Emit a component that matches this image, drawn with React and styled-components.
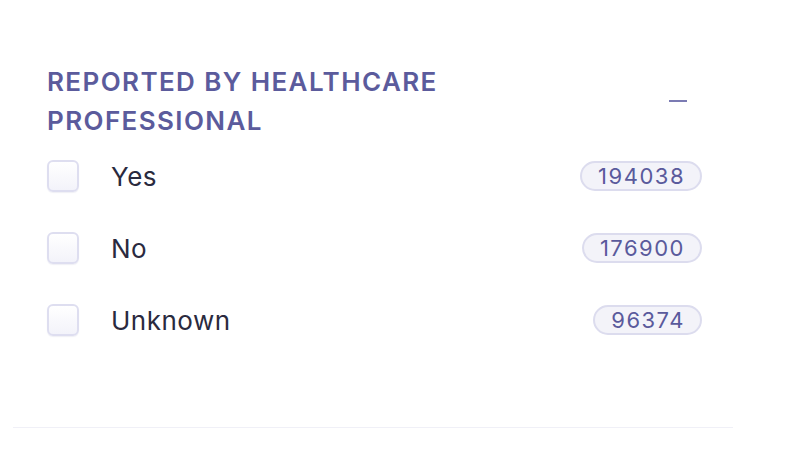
import React from "react";
import styled, { createGlobalStyle } from "styled-components";

const Global = createGlobalStyle`
  html, body { margin: 0; padding: 0; background: #ffffff; }
  body { font-family: Inter, "Noto Sans", sans-serif; -webkit-font-smoothing: antialiased; }
`;

const Page = styled.div`
  width: 800px;
  height: 456px;
  padding: 62px 0 0 13px;
  box-sizing: border-box;
`;

const Section = styled.section`
  width: 720px;
  box-sizing: border-box;
  padding: 0 31px 71px 34px;
  border-bottom: 1px solid #f0f0f7;
`;

const Header = styled.div`
  display: flex;
  align-items: center;
  justify-content: space-between;
`;

const Title = styled.h3`
  margin: 0;
  max-width: 450px;
  font-size: 26px;
  line-height: 39px;
  font-weight: 600;
  letter-spacing: 1.4px;
  color: #5b5b9c;
  text-transform: uppercase;
`;

const Toggle = styled.button`
  border: 0;
  background: none;
  padding: 0;
  margin-right: 15px;
  width: 18px;
  height: 18px;
  display: flex;
  align-items: center;
  justify-content: center;
  cursor: pointer;
`;

const Dash = styled.span`
  display: block;
  width: 18px;
  height: 2px;
  background: #7b7bb3;
`;

const List = styled.ul`
  list-style: none;
  margin: 0;
  padding: 0;
`;

const Row = styled.li`
  height: 72px;
  display: flex;
  align-items: center;
`;

const Box = styled.span`
  width: 32px;
  height: 32px;
  box-sizing: border-box;
  border: 2px solid #dedef0;
  border-radius: 6px;
  background: linear-gradient(#ffffff, #f3f3fa);
  box-shadow: 0 1px 1px rgba(120, 120, 170, 0.12);
  flex: none;
`;

const Label = styled.span`
  margin-left: 32px;
  font-size: 26px;
  letter-spacing: 0.5px;
  color: #2a2a3e;
  flex: 1;
`;

const Count = styled.span`
  height: 30px;
  box-sizing: border-box;
  padding: 0 15px 0 16px;
  border: 2px solid #dcdcee;
  border-radius: 15px;
  background: #f3f3f9;
  color: #5a5a9c;
  font-size: 22px;
  letter-spacing: 1.5px;
  display: flex;
  align-items: center;
`;

const items = [
  { label: "Yes", count: "194038" },
  { label: "No", count: "176900" },
  { label: "Unknown", count: "96374" },
];

export default function App() {
  return (
    <>
      <Global />
      <Page>
        <Section>
          <Header>
            <Title>Reported by healthcare professional</Title>
            <Toggle aria-label="Collapse">
              <Dash />
            </Toggle>
          </Header>
          <List>
            {items.map((it) => (
              <Row key={it.label}>
                <Box />
                <Label>{it.label}</Label>
                <Count>{it.count}</Count>
              </Row>
            ))}
          </List>
        </Section>
      </Page>
    </>
  );
}
